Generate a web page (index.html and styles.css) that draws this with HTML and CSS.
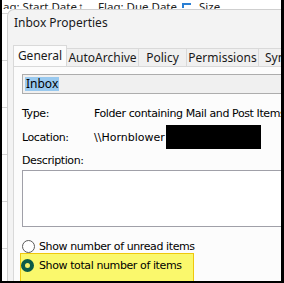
FILE: index.html
```html
<!DOCTYPE html>
<html lang="en">
<head>
  <meta charset="UTF-8" />
  <title>Inbox Properties</title>
  <link rel="stylesheet" href="styles.css">
</head>
<body>
  <div class="colunas">
    <span class="col-flag">ag: Start Date</span>
    <span class="col-seta">&#8593;</span>
    <span class="col-due">Flag: Due Date</span>
    <span class="col-icone"></span>
    <span class="col-size">Size</span>
  </div>

  <div class="fundo">
    <div class="dialogo">
      <div class="titulo">Inbox Properties</div>

      <div class="abas">
        <div class="aba ativa">General</div>
        <div class="aba w72">AutoArchive</div>
        <div class="aba w48">Policy</div>
        <div class="aba w72">Permissions</div>
        <div class="aba resto">Synchronization</div>
      </div>

      <div class="painel">
        <div class="campo"><span class="selecionado">Inbox</span></div>

        <div class="linha tipo">
          <span class="rotulo">Type:</span>
          <span class="valor">Folder containing Mail and Post Items</span>
        </div>
        <div class="linha local">
          <span class="rotulo">Location:</span>
          <span class="valor caminho">\\Hornblower</span>
          <span class="tarja"></span>
        </div>
        <div class="linha descricao">
          <span class="rotulo">Description:</span>
        </div>
        <div class="caixa"></div>

        <div class="opcao primeira">
          <span class="radio"></span>
          <span>Show number of unread items</span>
        </div>
        <div class="destaque">
          <div class="opcao">
            <span class="radio marcado"></span>
            <span>Show total number of items</span>
          </div>
        </div>
      </div>
    </div>
  </div>
</body>
</html>
```

FILE: styles.css
```css
html, body {
  margin: 0;
  padding: 0;
}
body {
  width: 284px;
  height: 283px;
  box-sizing: border-box;
  border-left: 2px solid #000;
  border-right: 3px solid #000;
  border-bottom: 2px solid #000;
  background-color: #fff;
  color: #000;
  font-family: 'Noto Sans', 'Open Sans', sans-serif;
  font-size: 12px;
  overflow: hidden;
  display: flex;
  flex-direction: column;
}
.colunas {
  height: 9px;
  flex: none;
  overflow: hidden;
  white-space: nowrap;
  display: flex;
  align-items: flex-end;
  line-height: 14px;
  font-size: 11.5px;
  color: #222;
}
.colunas span {
  margin-bottom: -5px;
  flex: none;
}
.col-flag {
  margin-left: 1px;
  width: 75px;
}
.col-seta {
  width: 20px;
}
.col-due {
  width: 84px;
}
.col-icone {
  width: 9px;
  height: 5px;
  border-top: 2px solid #2a7fd4;
  border-left: 2px solid #2a7fd4;
  box-sizing: border-box;
  margin-bottom: 1px !important;
  margin-right: 8px;
}
.fundo {
  flex: 1;
  display: flex;
  padding-left: 5px;
  min-height: 0;
  background-color: #fff;
  background-image: repeating-linear-gradient(to bottom, transparent 0, transparent 52px, #d4d4d4 52px, #d4d4d4 53px, transparent 53px, transparent 47px);
  background-image: repeating-linear-gradient(to bottom, transparent 0 4px, #d4d4d4 4px 5px, transparent 5px 47px);
}
.dialogo {
  flex: 1;
  background-color: #f3f3f3;
  border-left: 1px solid #cfcfcf;
  border-top: 1px solid #cfcfcf;
  border-top-left-radius: 7px;
  padding-left: 5px;
  display: flex;
  flex-direction: column;
  min-width: 0;
  min-height: 0;
}
.titulo {
  flex: none;
  height: 25px;
  line-height: 26px;
  padding-left: 1px;
  font-size: 12px;
  color: #1a1a1a;
}
.abas {
  flex: none;
  margin-top: 10px;
  height: 21px;
  display: flex;
  align-items: flex-end;
  white-space: nowrap;
  overflow: hidden;
}
.aba {
  height: 18px;
  line-height: 17px;
  box-sizing: border-box;
  border: 1px solid #d9d9d9;
  border-left: none;
  border-bottom: none;
  background-color: #f0f0f0;
  text-align: center;
  font-size: 12px;
  color: #1a1a1a;
  flex: none;
}
.aba.ativa {
  width: 54px;
  height: 21px;
  line-height: 19px;
  background-color: #fcfcfc;
  border-left: 1px solid #d9d9d9;
}
.w72 {
  width: 72px;
}
.w48 {
  width: 48px;
}
.resto {
  text-align: left;
  padding-left: 6px;
  width: 80px;
}
.painel {
  flex: 1;
  min-height: 0;
  background-color: #fcfcfc;
  border-left: 1px solid #d9d9d9;
  border-top: 1px solid #d9d9d9;
  padding: 7px 0 0 8px;
  font-family: 'DejaVu Sans', sans-serif;
  font-size: 11px;
  letter-spacing: -0.4px;
  white-space: nowrap;
  overflow: hidden;
}
.campo {
  height: 20px;
  box-sizing: border-box;
  border: 1px solid #adadad;
  border-right: none;
  background-color: #f0f0f0;
  padding: 2px 0 0 2px;
}
.selecionado {
  display: inline-block;
  background-color: #99c9ef;
  line-height: 14px;
  padding: 0 1px;
  font-family: 'Noto Sans', sans-serif;
  font-size: 12px;
  letter-spacing: 0;
}
.linha {
  display: flex;
  align-items: center;
}
.rotulo {
  width: 72px;
  flex: none;
}
.tipo {
  margin-top: 12px;
  height: 14px;
}
.local {
  margin-top: 5px;
  height: 24px;
}
.caminho {
  width: 72px;
  flex: none;
  letter-spacing: 0;
}
.tarja {
  width: 95px;
  height: 24px;
  background-color: #000;
  flex: none;
}
.descricao {
  margin-top: 4px;
  height: 14px;
}
.caixa {
  margin-top: 3px;
  height: 57px;
  box-sizing: border-box;
  border: 1px solid #a0a0a8;
  border-right: none;
  background-color: #fff;
}
.opcao {
  display: flex;
  align-items: center;
  gap: 4px;
  height: 14px;
}
.primeira {
  margin-top: 12px;
}
.radio {
  width: 13px;
  height: 13px;
  box-sizing: border-box;
  border-radius: 50%;
  border: 1px solid #5a5a5a;
  background-color: #fff;
  flex: none;
}
.radio.marcado {
  border: 4px solid #0a5a47;
  background-color: #f4f06a;
}
.destaque {
  margin-left: -2px;
  width: 174px;
  height: 40px;
  box-sizing: border-box;
  background-color: #faf86c;
  border: 1px solid #efc80c;
  padding-top: 4px;
}
.destaque .radio {
  margin-right: 1px;
}
```
